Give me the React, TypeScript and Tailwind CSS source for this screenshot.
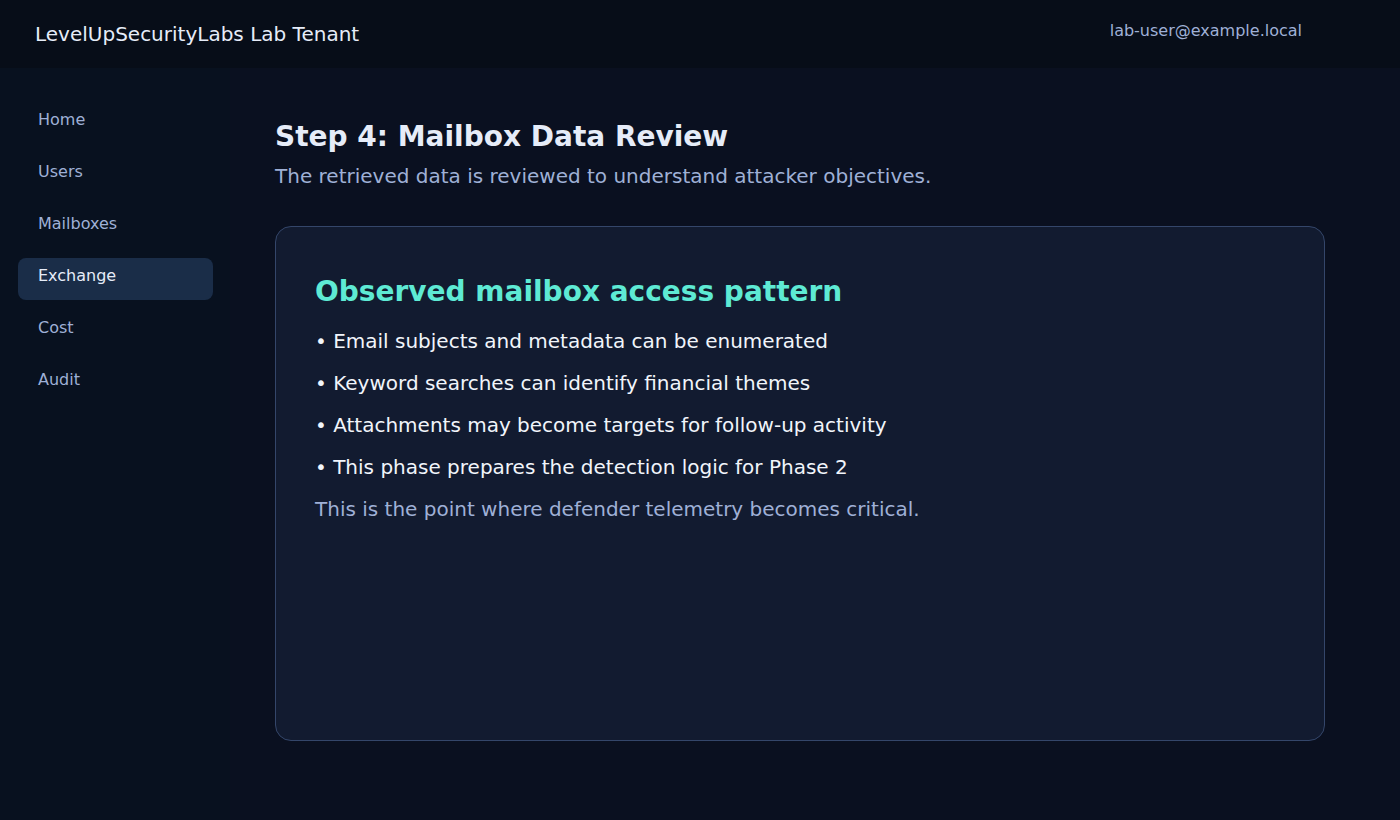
import React from "react"

const nav = ["Home", "Users", "Mailboxes", "Exchange", "Cost", "Audit"]

const bullets = [
  "Email subjects and metadata can be enumerated",
  "Keyword searches can identify financial themes",
  "Attachments may become targets for follow-up activity",
  "This phase prepares the detection logic for Phase 2",
]

export default function App() {
  return (
    <div className="min-h-screen w-full bg-[#0a1020] font-['DejaVu_Sans',sans-serif] flex flex-col">
      <header className="h-[68px] bg-[#070d18] flex items-center justify-between pl-[35px] pr-[98px]">
        <div className="text-[20px] text-[#e6ecf8]">LevelUpSecurityLabs Lab Tenant</div>
        <div className="text-[16px] text-[#9fb0d6] -mt-[6px]">lab-user@example.local</div>
      </header>

      <div className="flex flex-1">
        <aside className="w-[230px] min-h-[752px] bg-[#08111f] pl-[18px] pr-[17px] pt-[34px] flex flex-col gap-[10px]">
          {nav.map((item) => {
            const active = item === "Exchange"
            return (
              <div
                key={item}
                className={
                  active
                    ? "h-[42px] rounded-[8px] bg-[#1a2d48] pl-[20px] pt-[6px] text-[16px] text-[#e6ecf8]"
                    : "h-[42px] rounded-[8px] pl-[20px] pt-[6px] text-[16px] text-[#9fb0d6]"
                }
              >
                {item}
              </div>
            )
          })}
        </aside>

        <main className="flex-1 pl-[45px] pr-[75px] pt-[52px]">
          <h1 className="text-[28px] font-bold leading-[34px] text-[#e6ecf8]">Step 4: Mailbox Data Review</h1>
          <p className="mt-[8px] text-[20px] leading-[28px] text-[#9fb0d6]">
            The retrieved data is reviewed to understand attacker objectives.
          </p>

          <section className="mt-[36px] h-[515px] rounded-[16px] border-[1.5px] border-[#34466a] bg-[#121b30] px-[39px] pt-[45px]">
            <h2 className="text-[28px] font-bold leading-[40px] text-[#5eead4]">Observed mailbox access pattern</h2>
            <ul className="mt-[15px] flex flex-col gap-[14px]">
              {bullets.map((b) => (
                <li key={b} className="text-[20px] leading-[28px] text-[#f1f5fb]">
                  • {b}
                </li>
              ))}
            </ul>
            <p className="mt-[14px] text-[20px] leading-[28px] text-[#9fb0d6]">
              This is the point where defender telemetry becomes critical.
            </p>
          </section>
        </main>
      </div>
    </div>
  )
}
